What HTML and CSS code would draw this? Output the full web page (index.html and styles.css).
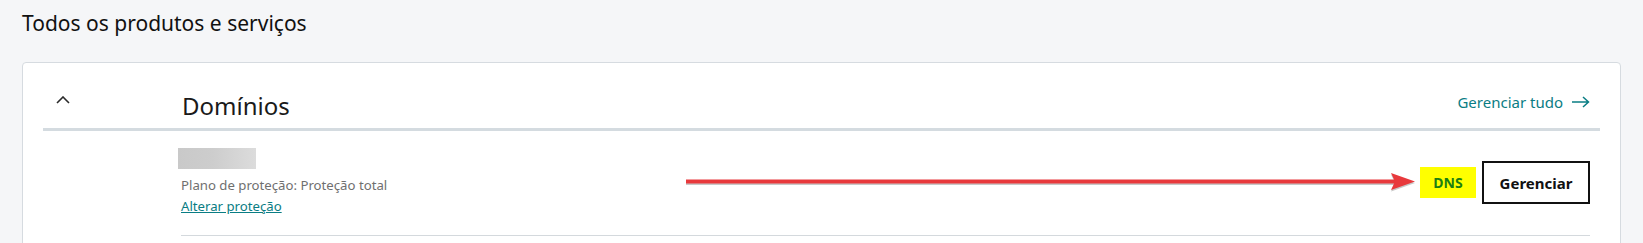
FILE: index.html
```html
<!DOCTYPE html>
<html lang="pt-BR">
<head>
<meta charset="utf-8">
<title>Todos os produtos e serviços</title>
<link rel="stylesheet" href="styles.css">
</head>
<body>
<main class="page">
  <h1 class="page-title">Todos os produtos e serviços</h1>
  <section class="card">
    <header class="card-head">
      <div class="toggle-col">
        <svg class="chevron" width="14" height="8" viewBox="0 0 14 8" aria-hidden="true"><path d="M1 7 L7 1 L13 7" fill="none" stroke="#2b2b2b" stroke-width="1.6"/></svg>
      </div>
      <h2 class="card-title">Domínios</h2>
      <a class="manage-all" href="#">Gerenciar tudo
        <svg class="arrow-right" width="18" height="12" viewBox="0 0 18 12" aria-hidden="true"><path d="M0 6 H16 M11 1 L16.5 6 L11 11" fill="none" stroke="#0a7d84" stroke-width="1.5"/></svg>
      </a>
    </header>
    <div class="card-body">
      <div class="spacer-col"></div>
      <div class="item">
        <div class="item-info">
          <div class="redacted"></div>
          <p class="plan">Plano de proteção: Proteção total</p>
          <a class="change" href="#">Alterar proteção</a>
        </div>
        <svg class="annot-arrow" width="729" height="20" viewBox="0 0 729 20" aria-hidden="true">
          <g transform="translate(0,1.5)" fill="#9a9a9a" opacity="0.55">
            <rect x="0" y="6.5" width="710" height="4"/>
            <polygon points="705,0 729,8.5 705,17 709,8.5"/>
          </g>
          <g fill="#e8393c">
            <rect x="0" y="6.5" width="710" height="4"/>
            <polygon points="705,0 729,8.5 705,17 709,8.5"/>
          </g>
        </svg>
        <span class="dns">DNS</span>
        <button class="manage-btn" type="button">Gerenciar</button>
      </div>
    </div>
  </section>
</main>
</body>
</html>
```

FILE: styles.css
```css
* { box-sizing: border-box; }

html, body {
  margin: 0;
  background: #f5f6f8;
  font-family: "Noto Sans", "Liberation Sans", Arial, sans-serif;
  color: #111;
}

.page {
  padding: 0 22px;
  height: 243px;
  overflow: hidden;
}

.page-title {
  margin: 0;
  padding-top: 9px;
  height: 62px;
  font-size: 21px;
  line-height: 28px;
  font-weight: 400;
  color: #111;
}

.card {
  background: #fff;
  border: 1px solid #d6dbe0;
  border-radius: 4px;
  padding: 0 20px;
  height: 300px;
}

.card-head {
  display: flex;
  align-items: center;
  height: 55px;
  padding-top: 10px;
  border-bottom: 3px solid #d4dbe0;
  box-sizing: content-box;
  padding-right: 10px;
}

.toggle-col {
  width: 138px;
  flex: none;
  padding-left: 13px;
  display: flex;
  align-items: center;
  padding-bottom: 2px;
}

.chevron { display: block; }

.card-title {
  margin: 0;
  flex: 1;
  font-size: 24px;
  line-height: 32px;
  font-weight: 400;
  color: #1a1a1a;
  padding-left: 1px;
  padding-top: 10px;
}

.manage-all {
  display: flex;
  align-items: center;
  gap: 9px;
  color: #0a7d84;
  text-decoration: none;
  font-size: 15px;
  line-height: 20px;
  padding-top: 3px;
}

.arrow-right { display: block; }

.card-body {
  display: flex;
  padding-right: 10px;
}

.spacer-col {
  width: 138px;
  flex: none;
}

.item {
  flex: 1;
  display: flex;
  align-items: center;
  padding: 17px 0 18px;
  border-bottom: 1px solid #d4d9dd;
}

.item-info {
  display: flex;
  flex-direction: column;
  align-items: flex-start;
}

.redacted {
  width: 78px;
  height: 21px;
  margin-left: -3px;
  margin-bottom: 6px;
  background: linear-gradient(90deg, #c9c9c9 0%, #cdcdcd 45%, #dcdcdc 100%);
}

.plan {
  margin: 0;
  font-size: 13.2px;
  line-height: 21px;
  color: #6f6f6f;
}

.change {
  font-size: 13.2px;
  line-height: 21px;
  color: #0a7d84;
  text-decoration: underline;
}

.annot-arrow {
  display: block;
  margin-left: auto;
  margin-right: 5px;
  margin-top: 1px;
}

.dns {
  display: flex;
  align-items: center;
  justify-content: center;
  width: 56px;
  height: 31px;
  background: #ffff00;
  color: #1b7f12;
  font-weight: 700;
  font-size: 14px;
  margin-right: 6px;
}

.manage-btn {
  width: 108px;
  height: 43px;
  border: 2px solid #111;
  border-radius: 0;
  background: #fff;
  color: #111;
  font-family: inherit;
  font-weight: 700;
  font-size: 15px;
  padding: 0;
  cursor: pointer;
}
```
